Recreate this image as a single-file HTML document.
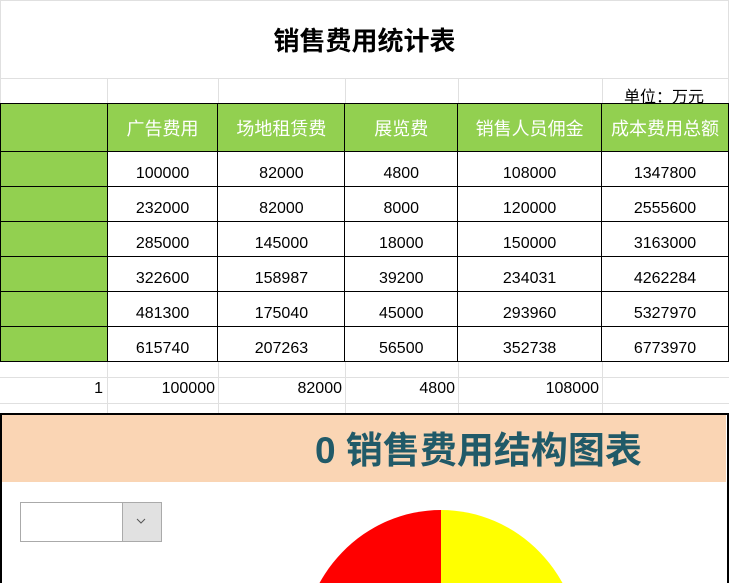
<!DOCTYPE html>
<html><head><meta charset="utf-8"><style>
*{margin:0;padding:0;box-sizing:border-box}
html,body{width:729px;height:583px;overflow:hidden}
body{background:#fff;position:relative;font-family:"Liberation Sans","Noto Sans CJK SC",sans-serif;color:#000}
.a{position:absolute}
.vl{position:absolute;width:1px;background:#e0e0e0}
.hl{position:absolute;height:1px;background:#e0e0e0}
table{position:absolute;left:0;top:103px;border-collapse:collapse;table-layout:fixed}
td{border:1px solid #000;text-align:center;font-size:16px;height:35px;padding-top:9px;line-height:18px}
th{border:1px solid #000;background:#92d050;color:#fff;font-weight:normal;font-size:18px;height:48px;white-space:nowrap;overflow:hidden}
td.g{background:#92d050}
.r{position:absolute;top:380px;font-size:16px;text-align:right}
</style></head><body>
<div class="hl" style="left:0;top:0;width:729px"></div>
<div class="vl" style="left:0;top:0;height:103px"></div>
<div class="vl" style="left:728px;top:0;height:103px"></div>
<div class="hl" style="left:0;top:78px;width:729px"></div>
<div class="a" style="left:0;top:21px;width:729px;text-align:center;font-size:26px;font-weight:bold">销售费用统计表</div>
<div class="vl" style="left:107px;top:78px;height:26px"></div>
<div class="vl" style="left:218px;top:78px;height:26px"></div>
<div class="vl" style="left:345px;top:78px;height:26px"></div>
<div class="vl" style="left:458px;top:78px;height:26px"></div>
<div class="vl" style="left:602px;top:78px;height:26px"></div>
<div class="a" style="left:624px;top:83px;font-size:16px">单位：万元</div>
<table>
<colgroup><col style="width:107px"><col style="width:111px"><col style="width:127px"><col style="width:113px"><col style="width:144px"><col style="width:127px"></colgroup>
<tr><th></th><th>广告费用</th><th>场地租赁费</th><th>展览费</th><th>销售人员佣金</th><th>成本费用总额</th></tr>
<tr><td class="g"></td><td>100000</td><td>82000</td><td>4800</td><td>108000</td><td>1347800</td></tr>
<tr><td class="g"></td><td>232000</td><td>82000</td><td>8000</td><td>120000</td><td>2555600</td></tr>
<tr><td class="g"></td><td>285000</td><td>145000</td><td>18000</td><td>150000</td><td>3163000</td></tr>
<tr><td class="g"></td><td>322600</td><td>158987</td><td>39200</td><td>234031</td><td>4262284</td></tr>
<tr><td class="g"></td><td>481300</td><td>175040</td><td>45000</td><td>293960</td><td>5327970</td></tr>
<tr><td class="g"></td><td>615740</td><td>207263</td><td>56500</td><td>352738</td><td>6773970</td></tr>
</table>
<div class="hl" style="left:0;top:377px;width:729px"></div>
<div class="hl" style="left:0;top:403px;width:729px"></div>
<div class="vl" style="left:107px;top:362px;height:52px"></div>
<div class="vl" style="left:218px;top:362px;height:52px"></div>
<div class="vl" style="left:345px;top:362px;height:52px"></div>
<div class="vl" style="left:458px;top:362px;height:52px"></div>
<div class="vl" style="left:602px;top:362px;height:52px"></div>
<div class="r" style="left:0;width:103px">1</div>
<div class="r" style="left:107px;width:108px">100000</div>
<div class="r" style="left:218px;width:124px">82000</div>
<div class="r" style="left:345px;width:110px">4800</div>
<div class="r" style="left:458px;width:141px">108000</div>
<div class="a" style="left:0;top:413px;width:729px;height:170px;border-top:2px solid #000;border-left:2px solid #000;border-right:2px solid #000;background:#fff"></div>
<div class="a" style="left:2px;top:415px;width:724px;height:67px;background:#fad5b4"></div>
<div class="a" style="left:315px;top:426px;font-size:37px;font-weight:bold;color:#215a68;white-space:nowrap;line-height:50px">0 销售费用结构图表</div>
<div class="a" style="left:20px;top:502px;width:142px;height:40px;border:1px solid #aaa;background:#fff"></div>
<div class="a" style="left:122px;top:503px;width:39px;height:38px;border-left:1px solid #aaa;background:#e1e1e1"></div>
<svg class="a" style="left:0;top:0" width="729" height="583">
<path d="M137 519 L141 523 L145 519" fill="none" stroke="#555" stroke-width="1"/>
<path d="M441 655 L441 510 A140 145 0 0 0 301 655 Z" fill="#ff0000"/>
<path d="M441 655 L441 510 A140 145 0 0 1 581 655 Z" fill="#ffff00"/>
</svg>
</body></html>
